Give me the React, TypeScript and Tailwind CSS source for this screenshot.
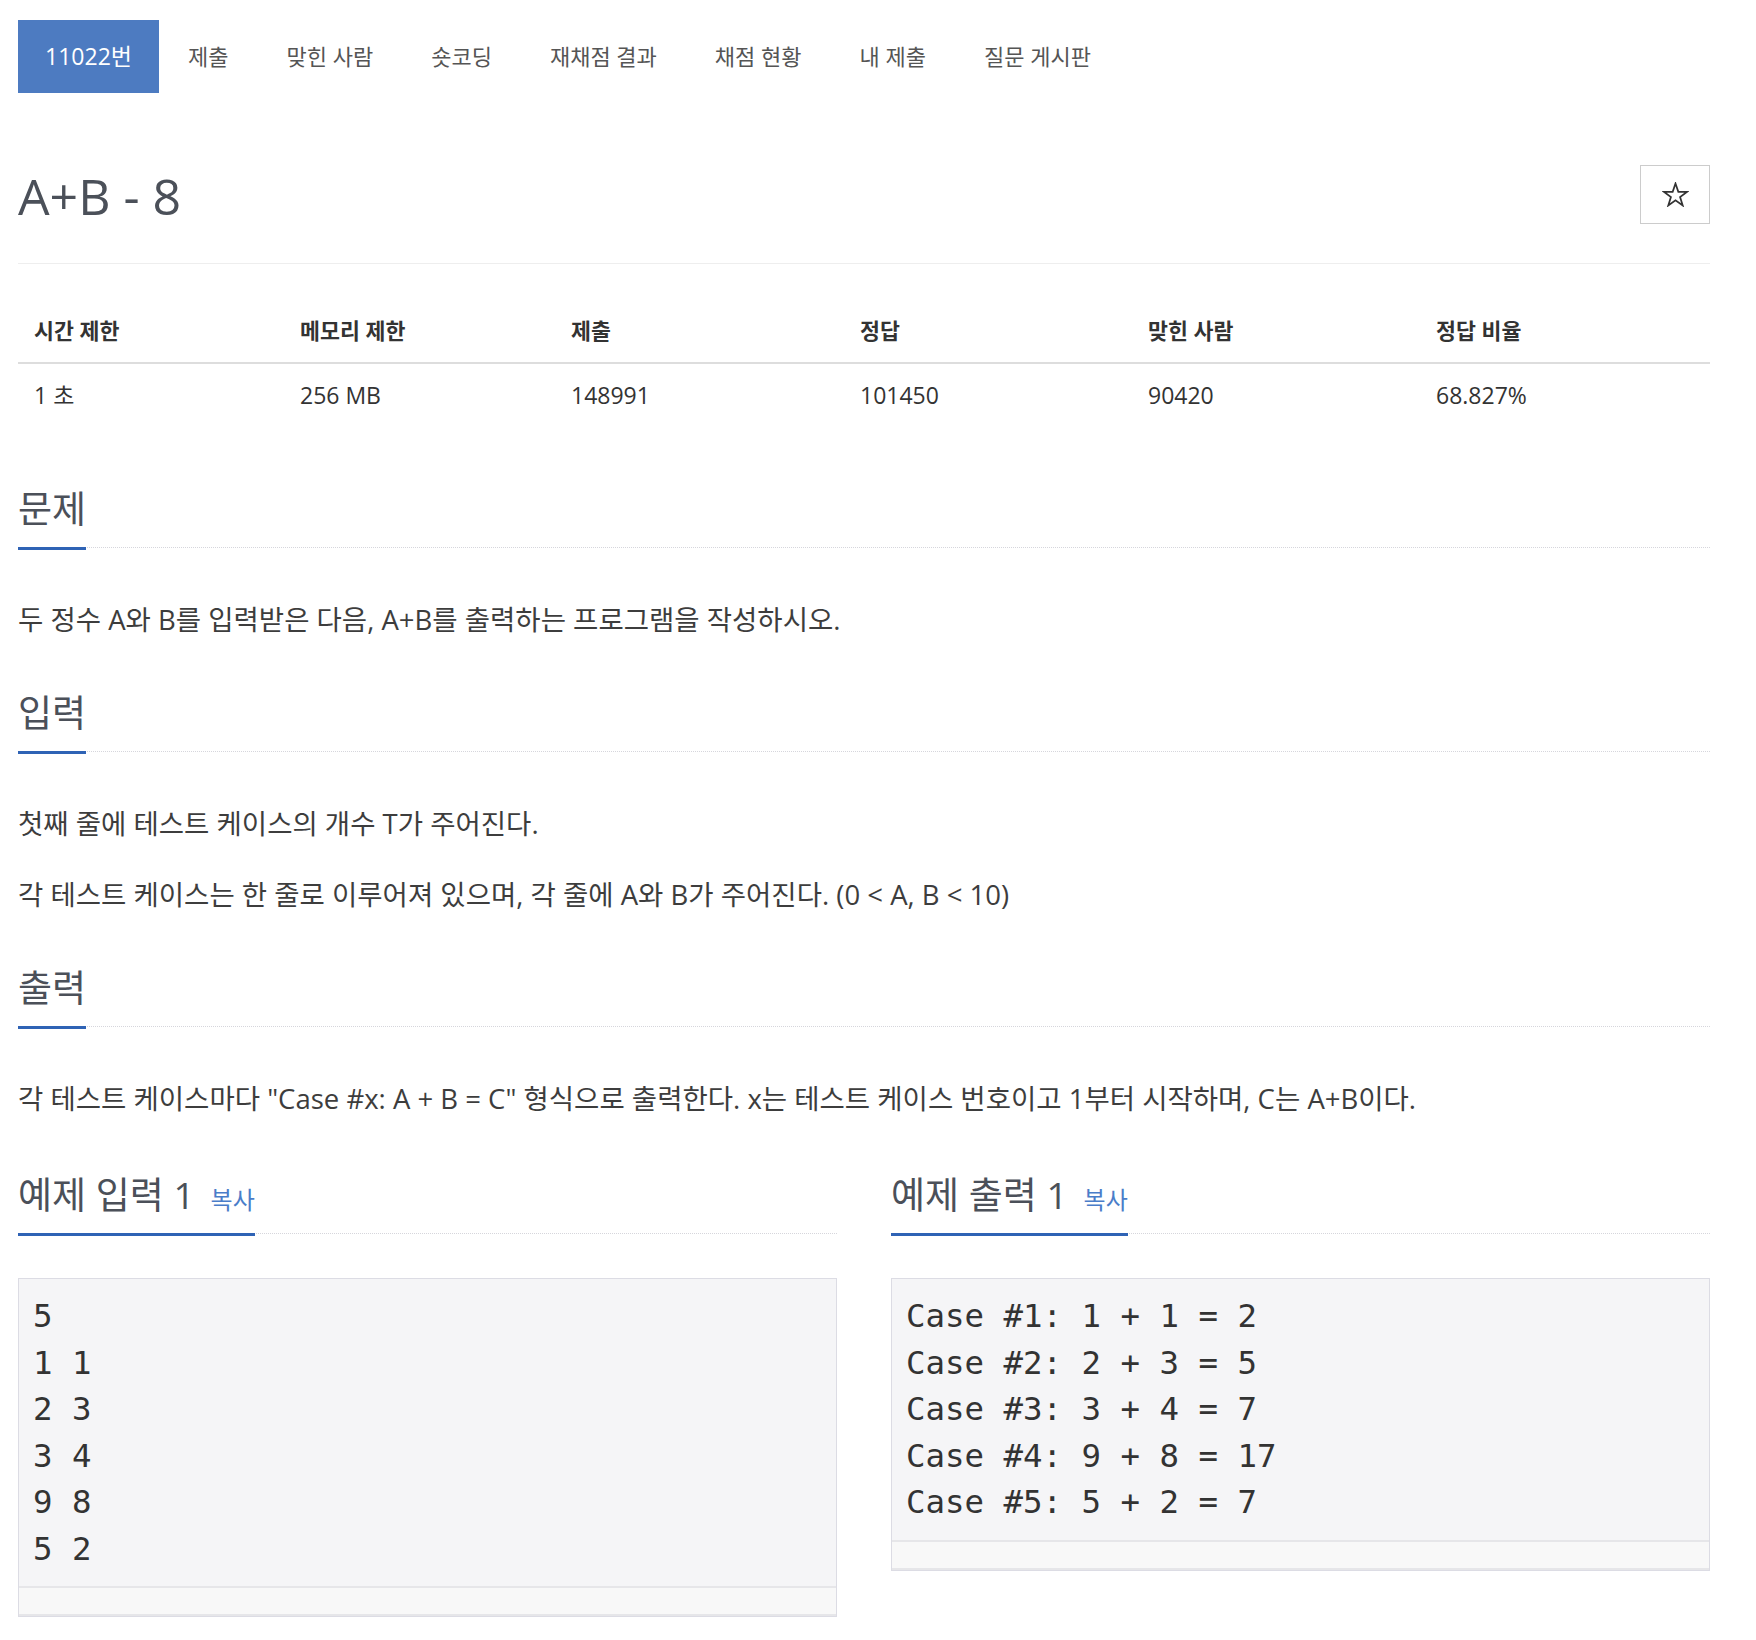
const tabs = ["제출", "맞힌 사람", "숏코딩", "재채점 결과", "채점 현황", "내 제출", "질문 게시판"];

const stats = [
  ["시간 제한", "1 초"],
  ["메모리 제한", "256 MB"],
  ["제출", "148991"],
  ["정답", "101450"],
  ["맞힌 사람", "90420"],
  ["정답 비율", "68.827%"],
];

const colWidths = ["w-[266px]", "w-[271px]", "w-[289px]", "w-[288px]", "w-[288px]", ""];

const sampleInput = ["5", "1 1", "2 3", "3 4", "9 8", "5 2"];
const sampleOutput = [
  "Case #1: 1 + 1 = 2",
  "Case #2: 2 + 3 = 5",
  "Case #3: 3 + 4 = 7",
  "Case #4: 9 + 8 = 17",
  "Case #5: 5 + 2 = 7",
];

function Headline({ children }: { children: React.ReactNode }) {
  return (
    <h2 className="flex border-b border-dotted border-[#d6d6dc] text-[37px] font-normal text-[#4b5059]">
      <span className="mb-[-3px] flex items-baseline border-b-[3px] border-[#2f63b5] pb-[14px] leading-[48px]">
        {children}
      </span>
    </h2>
  );
}

function Sample({ title, lines }: { title: string; lines: string[] }) {
  return (
    <div>
      <Headline>
        {title}
        <span className="ml-[16px] text-[24px] leading-none text-[#4a7dc9]">복사</span>
      </Headline>
      <div className="mt-[44px] border border-[#dcdce4] bg-[#f5f5f7]">
        <pre className="p-[14px] font-['DejaVu_Sans_Mono',monospace] text-[32.4px] leading-[46.5px] text-[#333]">
          {lines.join("\n")}
        </pre>
        <div className="h-[30px] border-y-2 border-[#e6e6e9] bg-[#f8f8f8]" />
      </div>
    </div>
  );
}

export default function App() {
  return (
    <div className="min-h-[1640px] w-[1756px] bg-white pl-[18px] pt-[20px] font-['Open_Sans','Noto_Sans_CJK_KR',sans-serif]">
      <div className="w-[1692px]">
        <nav className="flex h-[73px] text-[22px]">
          <a className="flex w-[141px] items-center justify-center bg-[#4d7bc1] text-[23px] text-white">11022번</a>
          {tabs.map((tab) => (
            <a key={tab} className="flex items-center px-[29px] text-[#555]">
              {tab}
            </a>
          ))}
        </nav>

        <div className="mt-[72px] flex items-start justify-between border-b border-[#eee] pb-[37px]">
          <h1 className="mt-[1px] text-[50px] leading-[60px] font-normal text-[#4b5059]">A+B - 8</h1>
          <button
            type="button"
            className="flex h-[59px] w-[70px] items-center justify-center border border-[#ccc] bg-white"
          >
            <svg width="27" height="25" viewBox="0 0 28 26" fill="none" stroke="#333" strokeWidth="1.8" strokeLinejoin="miter">
              <polygon points="14,1.5 16.94,10.2 26.2,10.2 18.76,15.6 21.5,24.4 14,19 6.5,24.4 9.24,15.6 1.8,10.2 11.06,10.2" />
            </svg>
          </button>
        </div>

        <table className="mt-[36px] w-full table-fixed border-collapse text-left text-[#333]">
          <thead>
            <tr className="border-b-2 border-[#ddd]">
              {stats.map(([label], i) => (
                <th key={label} className={`${colWidths[i]} px-[16px] py-[16px] text-[21.7px] leading-[30px] font-bold`}>
                  {label}
                </th>
              ))}
            </tr>
          </thead>
          <tbody>
            <tr>
              {stats.map(([label, value]) => (
                <td key={label} className="px-[16px] py-[16px] text-[23px] leading-[30px]">
                  {value}
                </td>
              ))}
            </tr>
          </tbody>
        </table>

        <section className="mt-[59px]">
          <Headline>문제</Headline>
          <p className="mt-[50px] text-[27.5px] leading-[44px] text-[#3d3d3d]">
            두 정수 A와 B를 입력받은 다음, A+B를 출력하는 프로그램을 작성하시오.
          </p>
        </section>

        <section className="mt-[47px]">
          <Headline>입력</Headline>
          <p className="mt-[50px] text-[27.5px] leading-[44px] text-[#3d3d3d]">
            첫째 줄에 테스트 케이스의 개수 T가 주어진다.
          </p>
          <p className="mt-[27px] text-[27.5px] leading-[44px] text-[#3d3d3d]">
            각 테스트 케이스는 한 줄로 이루어져 있으며, 각 줄에 A와 B가 주어진다. (0 &lt; A, B &lt; 10)
          </p>
        </section>

        <section className="mt-[47px]">
          <Headline>출력</Headline>
          <p className="mt-[50px] text-[27.5px] leading-[44px] text-[#3d3d3d]">
            각 테스트 케이스마다 "Case #x: A + B = C" 형식으로 출력한다. x는 테스트 케이스 번호이고 1부터 시작하며, C는 A+B이다.
          </p>
        </section>

        <div className="mt-[50px] grid grid-cols-2 items-start gap-[54px]">
          <Sample title="예제 입력 1" lines={sampleInput} />
          <Sample title="예제 출력 1" lines={sampleOutput} />
        </div>
      </div>
    </div>
  );
}
